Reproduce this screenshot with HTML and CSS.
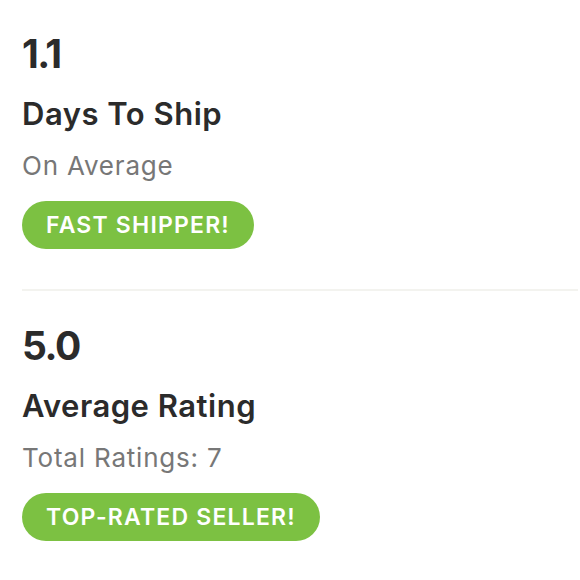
FILE: index.html
```html
<!DOCTYPE html>
<html>
<head>
<meta charset="utf-8">
<link rel="stylesheet" href="styles.css">
</head>
<body>
<div class="stats">
  <section class="stat">
    <div class="value">1.1</div>
    <div class="label">Days To Ship</div>
    <div class="sub">On Average</div>
    <span class="badge">FAST SHIPPER!</span>
  </section>
  <section class="stat">
    <div class="value">5.0</div>
    <div class="label">Average Rating</div>
    <div class="sub">Total Ratings: 7</div>
    <span class="badge">TOP-RATED SELLER!</span>
  </section>
</div>
</body>
</html>
```
FILE: styles.css
```css
html, body {
  margin: 0;
  padding: 0;
  background: #ffffff;
}
body {
  font-family: Inter, Lato, "Liberation Sans", sans-serif;
  color: #2b2b2b;
}
.stats {
  padding: 0 2px 0 22px;
  display: flex;
  flex-direction: column;
}
.stat {
  display: flex;
  flex-direction: column;
  align-items: flex-start;
  padding: 32px 0 40px;
}
.stat + .stat {
  border-top: 2px solid #f3f3ef;
  padding-top: 33px;
}
.value {
  font-size: 39px;
  font-weight: 700;
  line-height: 44px;
  letter-spacing: -1.5px;
}
.label {
  font-size: 31px;
  font-weight: 600;
  line-height: 36px;
  margin-top: 20px;
  letter-spacing: 0.5px;
}
.sub {
  font-size: 26px;
  color: #777777;
  line-height: 30px;
  margin-top: 19px;
  letter-spacing: 0.8px;
}
.badge {
  margin-top: 20px;
  background: #7cc142;
  color: #ffffff;
  font-weight: 600;
  font-size: 23px;
  letter-spacing: 1.2px;
  line-height: 48px;
  height: 48px;
  padding: 0 24px;
  border-radius: 24px;
}
```
